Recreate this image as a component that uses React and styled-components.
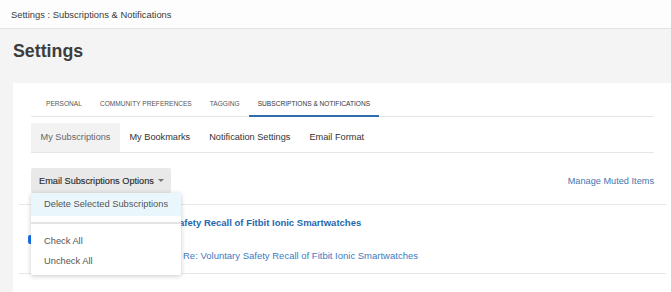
import React from 'react'
import styled, { createGlobalStyle } from 'styled-components'

const Global = createGlobalStyle`
  body {
    margin: 0;
    background: #f4f4f4;
    font-family: "Liberation Sans", Arial, sans-serif;
    color: #333;
  }
`

const TopBar = styled.div`
  height: 28px;
  background: #fdfdfd;
  border-bottom: 1px solid #e2e2e2;
  display: flex;
  align-items: center;
  padding-left: 11px;
  font-size: 9.4px;
  color: #3a3a3a;
`

const Heading = styled.h1`
  margin: 0;
  padding: 11px 13px 0;
  height: 22px;
  line-height: 22px;
  font-size: 17.8px;
  font-weight: 700;
  color: #3d3d3d;
`

const Card = styled.div`
  margin: 21px 0 0 13px;
  background: #fff;
  padding: 8px 17px 20px 18px;
`

const Tabs = styled.div`
  display: flex;
  padding-left: 6px;
  border-bottom: 1px solid #e6e6e6;
`

const Tab = styled.div`
  height: 26px;
  line-height: 26px;
  padding: 0 9px;
  font-size: 6.6px;
  text-transform: uppercase;
  color: ${p => (p.$active ? '#333' : '#555')};
  box-sizing: border-box;
  border-bottom: 2px solid ${p => (p.$active ? '#2f6ea8' : 'transparent')};
  margin-bottom: -1px;
`

const SubTabs = styled.div`
  display: flex;
  margin-top: 6px;
  border-bottom: 1px solid #e6e6e6;
`

const SubTab = styled.div`
  height: 29px;
  line-height: 29px;
  padding: 0 9.5px;
  font-size: 9.2px;
  color: ${p => (p.$active ? '#666' : '#333')};
  background: ${p => (p.$active ? '#f2f2f2' : 'transparent')};
`

const Toolbar = styled.div`
  display: flex;
  align-items: center;
  justify-content: space-between;
  margin-top: 15px;
  position: relative;
`

const OptionsButton = styled.div`
  height: 25px;
  display: flex;
  align-items: center;
  padding: 0 7px 0 8px;
  background: #e9e9e9;
  border-radius: 2px;
  font-size: 9.2px;
  color: #2e2e2e;
  -webkit-text-stroke: 0.15px #2e2e2e;
`

const Caret = styled.span`
  width: 0;
  height: 0;
  margin-left: 4px;
  border-left: 3px solid transparent;
  border-right: 3px solid transparent;
  border-top: 3px solid #777;
`

const MutedLink = styled.a`
  font-size: 9.2px;
  color: #4676b0;
  text-decoration: none;
`

const Menu = styled.div`
  position: absolute;
  top: 25px;
  left: 0;
  width: 150px;
  background: #fff;
  border-radius: 2px;
  box-shadow: 0 1px 5px rgba(0, 0, 0, 0.22);
  padding-bottom: 4px;
  z-index: 2;
`

const MenuItem = styled.div`
  height: ${p => (p.$tall ? 23 : 20)}px;
  line-height: ${p => (p.$tall ? 23 : 20)}px;
  padding-left: 13px;
  font-size: 9.3px;
  color: #555;
  background: ${p => (p.$hover ? '#e9f7fc' : 'transparent')};
`

const Divider = styled.div`
  height: 2px;
  background: #e4e4e4;
  margin: 6px 0 7px;
`

const List = styled.div`
  margin: 11px -12px 0 -12px;
  border-top: 1px solid #e8e8e8;
`

const Row = styled.div`
  display: flex;
  align-items: center;
  padding: 11px 0 10px 9px;
  border-bottom: 1px solid #e8e8e8;
`

const Check = styled.span`
  width: 9px;
  height: 9px;
  border-radius: 2px;
  background: #1a73e8;
  flex: none;
`

const Content = styled.div`
  display: flex;
  flex-direction: column;
  gap: 19px;
  margin-left: 90px;
`

const Title = styled.a`
  font-size: 9.5px;
  line-height: 14px;
  font-weight: 700;
  color: #1f68b0;
  text-decoration: none;
`

const Reply = styled.a`
  font-size: 9.5px;
  line-height: 14px;
  padding-left: 56px;
  color: #3d7bbf;
  text-decoration: none;
`

export default function App() {
  const tabs = ['Personal', 'Community Preferences', 'Tagging', 'Subscriptions & Notifications']
  const subTabs = ['My Subscriptions', 'My Bookmarks', 'Notification Settings', 'Email Format']
  return (
    <>
      <Global />
      <TopBar>Settings : Subscriptions &amp; Notifications</TopBar>
      <Heading>Settings</Heading>
      <Card>
        <Tabs>
          {tabs.map((t, i) => (
            <Tab key={t} $active={i === 3}>{t}</Tab>
          ))}
        </Tabs>
        <SubTabs>
          {subTabs.map((t, i) => (
            <SubTab key={t} $active={i === 0}>{t}</SubTab>
          ))}
        </SubTabs>
        <Toolbar>
          <OptionsButton>
            Email Subscriptions Options
            <Caret />
          </OptionsButton>
          <MutedLink href="#">Manage Muted Items</MutedLink>
          <Menu>
            <MenuItem $tall $hover>Delete Selected Subscriptions</MenuItem>
            <Divider />
            <MenuItem>Check All</MenuItem>
            <MenuItem>Uncheck All</MenuItem>
          </Menu>
        </Toolbar>
        <List>
          <Row>
            <Check />
            <Content>
              <Title href="#">Voluntary Safety Recall of Fitbit Ionic Smartwatches</Title>
              <Reply href="#">Re: Voluntary Safety Recall of Fitbit Ionic Smartwatches</Reply>
            </Content>
          </Row>
        </List>
      </Card>
    </>
  )
}
